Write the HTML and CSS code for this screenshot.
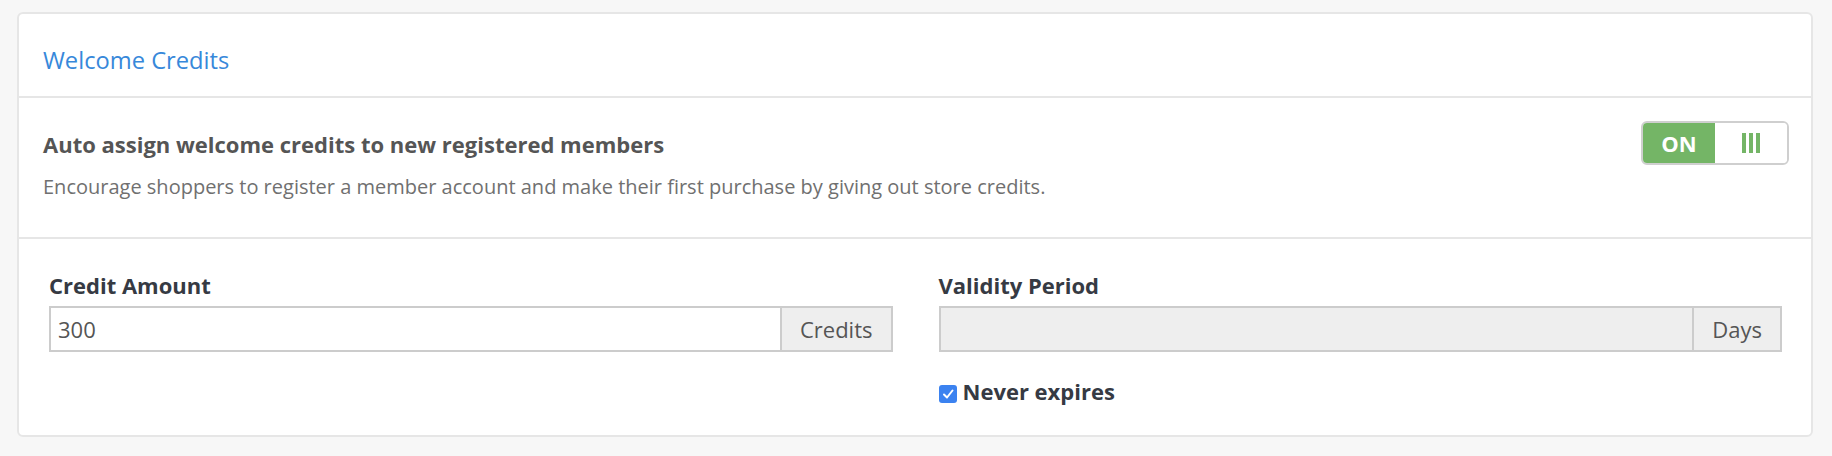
FILE: index.html
```html
<!DOCTYPE html>
<html>
<head>
<meta charset="utf-8">
<link rel="stylesheet" href="styles.css">
</head>
<body>
<div class="card">
  <div class="card-header">
    <h2 class="card-title">Welcome Credits</h2>
  </div>
  <div class="setting-row">
    <div class="setting-text">
      <div class="setting-title">Auto assign welcome credits to new registered members</div>
      <div class="setting-desc">Encourage shoppers to register a member account and make their first purchase by giving out store credits.</div>
    </div>
    <div class="toggle">
      <span class="toggle-on">ON</span>
      <span class="toggle-handle">
        <svg width="18" height="20" viewBox="0 0 18 20"><rect x="0" y="0" width="4" height="20" fill="#74b566"/><rect x="7" y="0" width="4" height="20" fill="#74b566"/><rect x="14" y="0" width="4" height="20" fill="#74b566"/></svg>
      </span>
    </div>
  </div>
  <div class="form-grid">
    <div class="field">
      <label class="field-label">Credit Amount</label>
      <div class="input-group">
        <div class="input">300</div>
        <div class="addon">Credits</div>
      </div>
    </div>
    <div class="field">
      <label class="field-label">Validity Period</label>
      <div class="input-group">
        <div class="input disabled"></div>
        <div class="addon">Days</div>
      </div>
      <div class="check-row">
        <span class="checkbox">
          <svg width="12" height="12" viewBox="0 0 12 12"><path d="M2 6.5 L5 9.5 L10.5 2.5" fill="none" stroke="#fff" stroke-width="2" stroke-linecap="round" stroke-linejoin="round"/></svg>
        </span>
        <span class="check-label">Never expires</span>
      </div>
    </div>
  </div>
</div>
</body>
</html>
```

FILE: styles.css
```css
html, body {
  margin: 0;
  padding: 0;
}
body {
  background: #f7f7f7;
  font-family: "Open Sans", "Noto Sans", sans-serif;
  padding: 12px 19px 0 17px;
  height: 456px;
  box-sizing: border-box;
}
.card {
  background: #fff;
  border: 2px solid #e6e6e6;
  border-radius: 6px;
  height: 425px;
  box-sizing: border-box;
}
.card-header {
  height: 84px;
  border-bottom: 2px solid #e6e6e6;
  display: flex;
  align-items: center;
  padding: 10px 24px 0;
  box-sizing: border-box;
}
.card-title {
  margin: 0;
  font-weight: 400;
  font-size: 23.7px;
  color: #3788da;
}
.setting-row {
  display: flex;
  justify-content: space-between;
  align-items: flex-start;
  padding: 23px 22px 0 24px;
  height: 141px;
  box-sizing: border-box;
  border-bottom: 2px solid #e6e6e6;
}
.setting-text {
  padding-top: 9px;
}
.setting-title {
  font-weight: 700;
  font-size: 22px;
  color: #555;
  line-height: 28px;
}
.setting-desc {
  margin-top: 16px;
  font-size: 20px;
  color: #707070;
  line-height: 26px;
}
.toggle {
  display: flex;
  width: 148px;
  height: 44px;
  border: 2px solid #cfcfcf;
  border-radius: 6px;
  overflow: hidden;
  box-sizing: border-box;
}
.toggle-on {
  width: 72px;
  background: #74b566;
  color: #fff;
  font-weight: 700;
  font-size: 22px;
  display: flex;
  align-items: center;
  justify-content: center;
}
.toggle-handle {
  flex: 1;
  display: flex;
  align-items: center;
  justify-content: center;
  background: #fff;
}
.form-grid {
  display: grid;
  grid-template-columns: 1fr 1fr;
  column-gap: 46px;
  padding: 31px 29px 0 30px;
}
.field-label {
  display: block;
  font-weight: 700;
  font-size: 22px;
  color: #363a43;
  line-height: 30px;
  margin-bottom: 6px;
}
.input-group {
  display: flex;
  height: 46px;
  border: 2px solid #cccccc;
  box-sizing: border-box;
}
.input {
  flex: 1;
  display: flex;
  align-items: center;
  padding: 0 7px;
  font-size: 22px;
  color: #555;
  background: #fff;
}
.input.disabled {
  background: #eeeeee;
}
.addon {
  display: flex;
  align-items: center;
  padding: 0 18px;
  border-left: 2px solid #cccccc;
  background: #eeeeee;
  font-size: 22px;
  color: #555;
}
.check-row {
  display: flex;
  align-items: flex-start;
  margin-top: 25px;
}
.checkbox {
  width: 18px;
  height: 18px;
  border-radius: 3px;
  background: #3b82f0;
  display: flex;
  align-items: center;
  justify-content: center;
  margin: 8px 6px 0 0;
}
.check-label {
  font-weight: 700;
  font-size: 22px;
  color: #363a43;
  line-height: 28px;
}
```
